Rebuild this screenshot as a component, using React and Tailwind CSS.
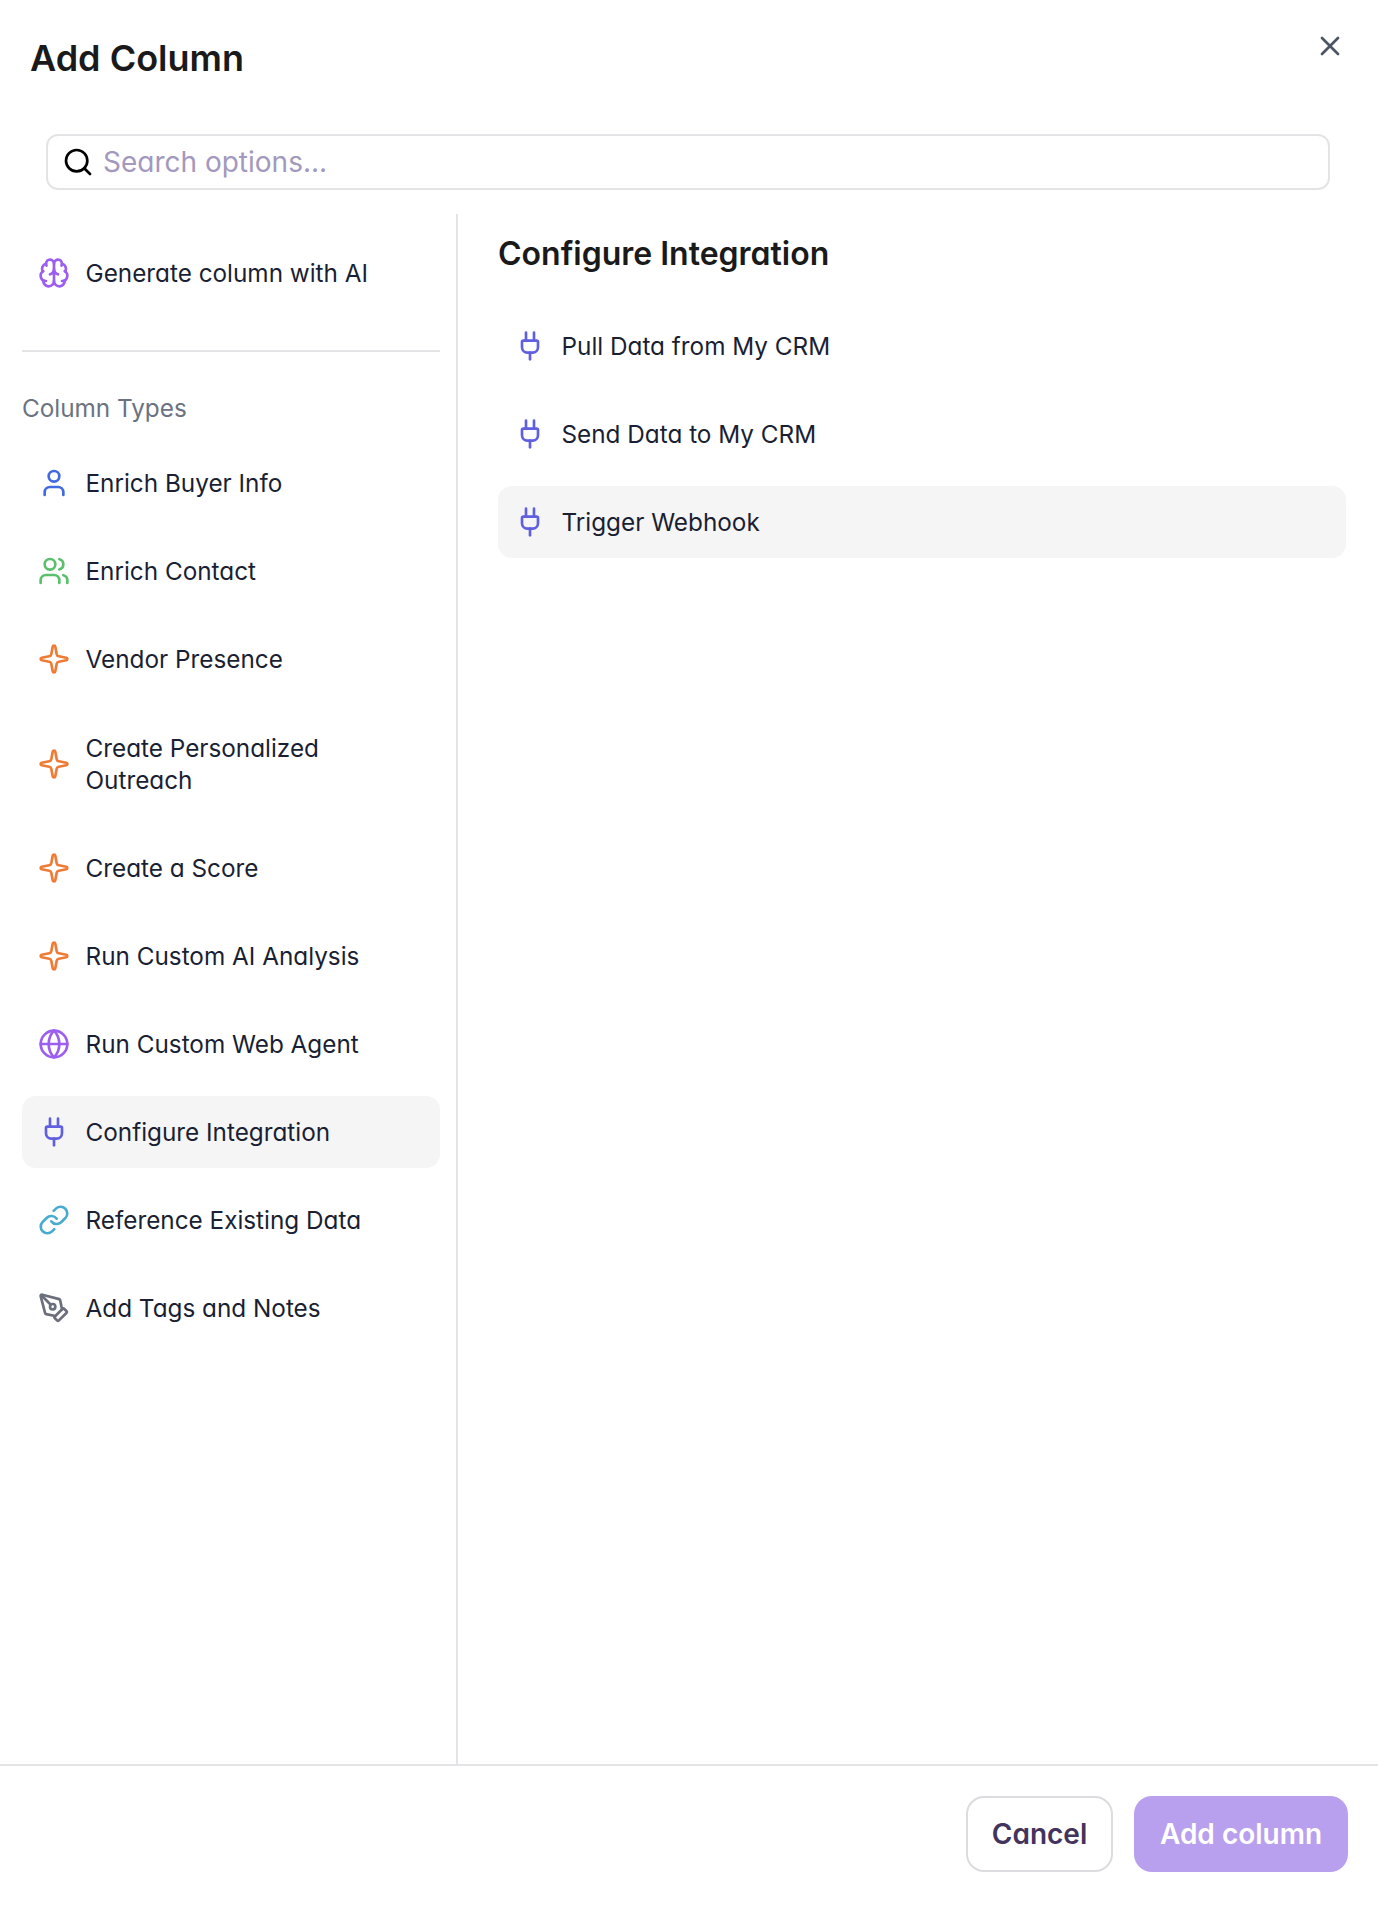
import { Brain, Globe, Link, PenTool, Plug, Search, Sparkle, User, Users, X } from "lucide-react";

const columnTypes = [
    { label: "Enrich Buyer Info", icon: User, color: "text-[#4169e1]" },
    { label: "Enrich Contact", icon: Users, color: "text-[#5cbf6b]" },
    { label: "Vendor Presence", icon: Sparkle, color: "text-[#ee7b36]" },
    { label: "Create Personalized Outreach", icon: Sparkle, color: "text-[#ee7b36]", tall: true },
    { label: "Create a Score", icon: Sparkle, color: "text-[#ee7b36]" },
    { label: "Run Custom AI Analysis", icon: Sparkle, color: "text-[#ee7b36]" },
    { label: "Run Custom Web Agent", icon: Globe, color: "text-[#9b5ef0]" },
    { label: "Configure Integration", icon: Plug, color: "text-[#5f5fe0]", active: true },
    { label: "Reference Existing Data", icon: Link, color: "text-[#4aabd0]" },
    { label: "Add Tags and Notes", icon: PenTool, color: "text-[#6b6f7c]" },
];

const integrations = [
    { label: "Pull Data from My CRM" },
    { label: "Send Data to My CRM" },
    { label: "Trigger Webhook", active: true },
];

function Row({ label, icon: Icon, color, active, tall }) {
    return (
        <div
            className={`flex items-center gap-[15.5px] px-[16px] rounded-[14px] mb-4 ${tall ? "h-[105px]" : "h-[72px]"} ${active ? "bg-[#f5f5f5]" : ""}`}
        >
            <Icon className={`w-[32px] h-[32px] shrink-0 ${color}`} strokeWidth={2} />
            <span className="text-[24.3px] leading-[32px] text-[#1a1f33]">{label}</span>
        </div>
    );
}

export default function App() {
    return (
        <div className="w-[1378px] h-[1914px] flex flex-col bg-white font-['Inter',sans-serif] [font-feature-settings:'cv11']">
            <div className="flex justify-between pl-[30px] pr-[32px] pt-[36px] h-[134px]">
                <h1 className="text-[36px] leading-[44px] font-semibold text-[#1a1a1a]">Add Column</h1>
                <X className="w-[32px] h-[32px] mt-[-6px] text-[#4b5563]" strokeWidth={2} />
            </div>
            <div className="px-[46px] pr-[48px]">
                <div className="h-[56px] border-2 border-[#e4e4e7] rounded-[12px] flex items-center gap-[9px] pl-[14px]">
                    <Search className="w-[32px] h-[32px] text-black" strokeWidth={2} />
                    <span className="text-[28px] text-[#a398bd]">Search options...</span>
                </div>
            </div>
            <div className="flex flex-1 mt-[24px] min-h-0">
                <div className="w-[458px] border-r-2 border-[#e4e4e7] px-[22px] pr-[16px] pt-[23px]">
                    <Row label="Generate column with AI" icon={Brain} color="text-[#9b5ef0]" />
                    <div className="border-t-2 border-[#e4e4e7] mt-[41px]"></div>
                    <div className="text-[24.3px] leading-[32px] text-[#6b7280] mt-[40px] mb-[23px]">Column Types</div>
                    {columnTypes.map((item) => (
                        <Row key={item.label} {...item} />
                    ))}
                </div>
                <div className="flex-1 pl-[40px] pr-[32px]">
                    <h2 className="text-[32px] leading-[40px] font-semibold text-[#1a1a1a] mt-[20px] mb-[35.5px]">Configure Integration</h2>
                    {integrations.map((item) => (
                        <Row key={item.label} {...item} icon={Plug} color="text-[#5f5fe0]" />
                    ))}
                </div>
            </div>
            <div className="h-[150px] border-t-2 border-[#e4e4e7] flex justify-end items-start gap-[21px] pt-[30px] pr-[30px]">
                <button className="h-[76px] w-[147px] border-2 border-[#dcdce0] rounded-[18px] text-[28px] font-semibold text-[#42345c]">Cancel</button>
                <button className="h-[76px] w-[214px] bg-[#b9a0ee] rounded-[18px] text-[28px] font-semibold text-white">Add column</button>
            </div>
        </div>
    );
}
